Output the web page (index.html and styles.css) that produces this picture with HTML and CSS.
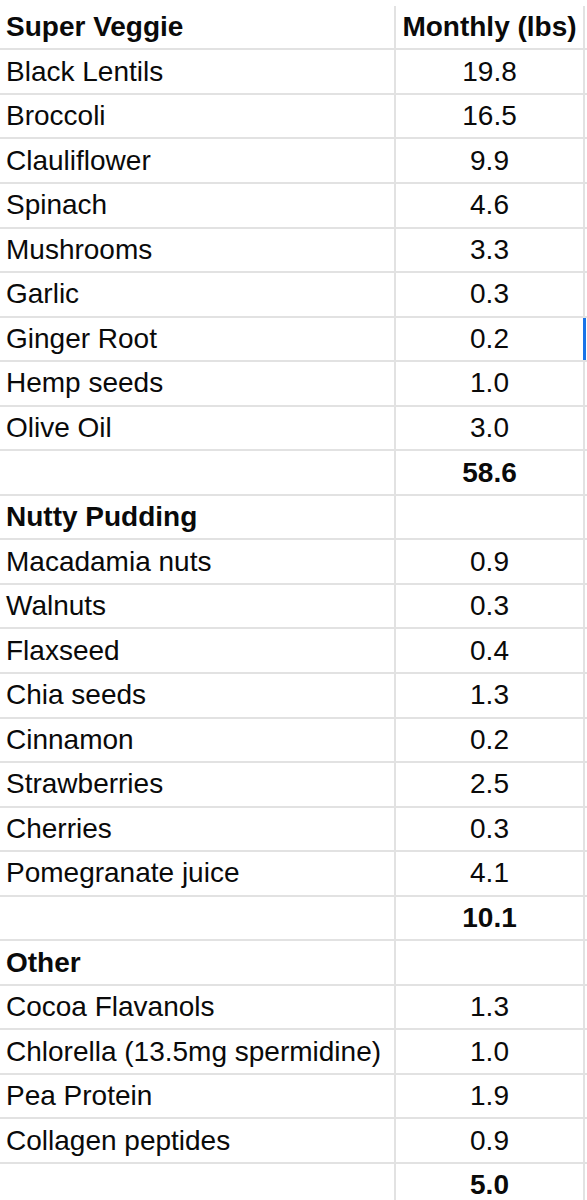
FILE: index.html
```html
<!DOCTYPE html>
<html>
<head>
<meta charset="utf-8">
<link rel="stylesheet" href="styles.css">
</head>
<body>
<div class="sheet">
  <div class="row"><div class="name bold">Super Veggie</div><div class="val bold">Monthly (lbs)</div></div>
  <div class="row"><div class="name">Black Lentils</div><div class="val">19.8</div></div>
  <div class="row"><div class="name">Broccoli</div><div class="val">16.5</div></div>
  <div class="row"><div class="name">Clauliflower</div><div class="val">9.9</div></div>
  <div class="row"><div class="name">Spinach</div><div class="val">4.6</div></div>
  <div class="row"><div class="name">Mushrooms</div><div class="val">3.3</div></div>
  <div class="row"><div class="name">Garlic</div><div class="val">0.3</div></div>
  <div class="row"><div class="name">Ginger Root</div><div class="val selected">0.2</div></div>
  <div class="row"><div class="name">Hemp seeds</div><div class="val">1.0</div></div>
  <div class="row"><div class="name">Olive Oil</div><div class="val">3.0</div></div>
  <div class="row"><div class="name"></div><div class="val bold">58.6</div></div>
  <div class="row"><div class="name bold">Nutty Pudding</div><div class="val"></div></div>
  <div class="row"><div class="name">Macadamia nuts</div><div class="val">0.9</div></div>
  <div class="row"><div class="name">Walnuts</div><div class="val">0.3</div></div>
  <div class="row"><div class="name">Flaxseed</div><div class="val">0.4</div></div>
  <div class="row"><div class="name">Chia seeds</div><div class="val">1.3</div></div>
  <div class="row"><div class="name">Cinnamon</div><div class="val">0.2</div></div>
  <div class="row"><div class="name">Strawberries</div><div class="val">2.5</div></div>
  <div class="row"><div class="name">Cherries</div><div class="val">0.3</div></div>
  <div class="row"><div class="name">Pomegranate juice</div><div class="val">4.1</div></div>
  <div class="row"><div class="name"></div><div class="val bold">10.1</div></div>
  <div class="row"><div class="name bold">Other</div><div class="val"></div></div>
  <div class="row"><div class="name">Cocoa Flavanols</div><div class="val">1.3</div></div>
  <div class="row"><div class="name">Chlorella (13.5mg spermidine)</div><div class="val">1.0</div></div>
  <div class="row"><div class="name">Pea Protein</div><div class="val">1.9</div></div>
  <div class="row"><div class="name">Collagen peptides</div><div class="val">0.9</div></div>
  <div class="row"><div class="name"></div><div class="val bold">5.0</div></div>
</div>
</body>
</html>
```

FILE: styles.css
```css
html, body {
  margin: 0;
  padding: 0;
  background: #ffffff;
}

body {
  font-family: "Liberation Sans", Arial, sans-serif;
  font-size: 28px;
  color: #0a0a0a;
  overflow: hidden;
}

.sheet {
  padding-top: 5.8px;
  width: 587px;
}

.row {
  display: flex;
  height: 44.56px;
  box-sizing: border-box;
  border-bottom: 2px solid #e2e2e2;
}

.name {
  width: 394px;
  box-sizing: border-box;
  padding-left: 6px;
  display: flex;
  align-items: center;
  white-space: nowrap;
}

.val {
  width: 191px;
  box-sizing: border-box;
  border-left: 2px solid #e2e2e2;
  border-right: 2px solid #e2e2e2;
  display: flex;
  align-items: center;
  justify-content: center;
  white-space: nowrap;
  position: relative;
}

.bold {
  font-weight: bold;
}

.selected::after {
  content: "";
  position: absolute;
  right: -3px;
  top: 0;
  width: 3px;
  height: 100%;
  background: #1a73e8;
}
```
